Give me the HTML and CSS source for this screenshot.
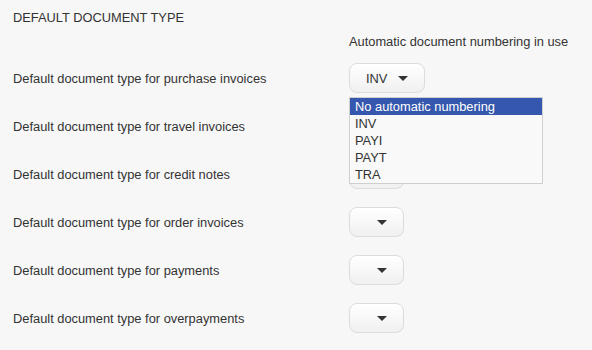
FILE: index.html
```html
<!DOCTYPE html>
<html lang="en">
<head>
    <meta charset="UTF-8">
    <title>Default document type</title>
    <link rel="stylesheet" href="styles.css">
</head>
<body>
    <div class="settings">
        <h2 class="section-title">DEFAULT DOCUMENT TYPE</h2>

        <div class="settings-grid">
            <div></div>
            <div class="col-head">Automatic document numbering in use</div>

            <div class="label">Default document type for purchase invoices</div>
            <div class="field">
                <div class="select">
                    <span class="select-value">INV</span>
                    <span class="caret"></span>
                </div>
                <ul class="select-menu">
                    <li class="selected">No automatic numbering</li>
                    <li>INV</li>
                    <li>PAYI</li>
                    <li>PAYT</li>
                    <li>TRA</li>
                </ul>
            </div>

            <div class="label">Default document type for travel invoices</div>
            <div class="field">
                <div class="select"><span class="select-value"></span><span class="caret"></span></div>
            </div>

            <div class="label">Default document type for credit notes</div>
            <div class="field">
                <div class="select"><span class="select-value"></span><span class="caret"></span></div>
            </div>

            <div class="label">Default document type for order invoices</div>
            <div class="field">
                <div class="select"><span class="select-value"></span><span class="caret"></span></div>
            </div>

            <div class="label">Default document type for payments</div>
            <div class="field">
                <div class="select"><span class="select-value"></span><span class="caret"></span></div>
            </div>

            <div class="label">Default document type for overpayments</div>
            <div class="field">
                <div class="select"><span class="select-value"></span><span class="caret"></span></div>
            </div>
        </div>
    </div>
</body>
</html>
```

FILE: styles.css
```css
* {
    margin: 0;
    padding: 0;
    box-sizing: border-box;
}

body {
    background: #f7f7f7;
    color: #333;
    font-family: 'Liberation Sans', Arial, sans-serif;
    font-size: 12.85px;
}

.settings {
    padding: 10px 13px;
}

.section-title {
    font-size: 12.85px;
    font-weight: normal;
    line-height: 15px;
    color: #333;
}

.settings-grid {
    display: grid;
    grid-template-columns: 336px auto;
    row-gap: 18px;
    align-items: center;
    margin-top: 9px;
}

.col-head {
    line-height: 15px;
    margin-bottom: -4px;
}

.label {
    line-height: 15px;
}

.field {
    position: relative;
}

.select {
    display: inline-flex;
    align-items: center;
    height: 30px;
    padding: 0 16px;
    border: 1px solid #dcdcdc;
    border-radius: 8px;
    background: linear-gradient(#ffffff, #f0f0f0);
    color: #333;
}

.select-value {
    margin-right: 11px;
}

.caret {
    width: 0;
    height: 0;
    border-left: 5px solid transparent;
    border-right: 5px solid transparent;
    border-top: 5px solid #333;
    margin-top: 1px;
}

/* open dropdown list of the first select */
.select-menu {
    position: absolute;
    top: 34px;
    left: 0;
    width: 194px;
    list-style: none;
    background: #f9f9f9;
    border: 1px solid #cfcfcf;
    z-index: 5;
}

.select-menu li {
    height: 17px;
    line-height: 17px;
    padding-left: 5px;
    color: #333;
}

.select-menu li.selected {
    background: #3557ad;
    color: #fff;
}
```
